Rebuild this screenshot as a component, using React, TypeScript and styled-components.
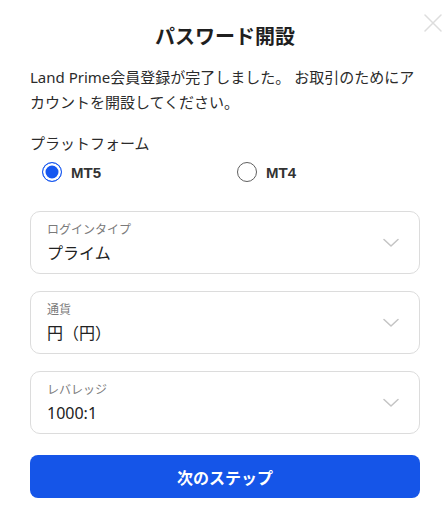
import { useState } from 'react'
import { styled, createGlobalStyle } from 'styled-components'

const GlobalStyle = createGlobalStyle`
  html, body {
    margin: 0;
    padding: 0;
    background: #ffffff;
  }
  body {
    font-family: "Noto Sans", "Noto Sans CJK JP", sans-serif;
    color: #222222;
  }
  * {
    box-sizing: border-box;
  }
`

const fields = [
  { label: 'ログインタイプ', value: 'プライム' },
  { label: '通貨', value: '円（円）' },
  { label: 'レバレッジ', value: '1000:1' },
]

const ChevronIcon = () => (
  <svg width="16" height="10" viewBox="0 0 16 10" fill="none">
    <path d="M1 1.5 L8 8 L15 1.5" stroke="#c4c4c4" strokeWidth="1.5" strokeLinecap="round" strokeLinejoin="round" />
  </svg>
)

const CloseIcon = () => (
  <svg width="18" height="18" viewBox="0 0 18 18" fill="none">
    <path d="M1 1 L17 17 M17 1 L1 17" stroke="#dddddd" strokeWidth="1.5" strokeLinecap="round" />
  </svg>
)

const App = () => {
  const [platform, setPlatform] = useState('MT5')

  return (
    <>
      <GlobalStyle />
      <Modal>
        <CloseButton aria-label="close">
          <CloseIcon />
        </CloseButton>
        <Title>パスワード開設</Title>
        <Description>
          Land Prime会員登録が完了しました。 お取引のためにアカウントを開設してください。
        </Description>
        <SectionLabel>プラットフォーム</SectionLabel>
        <RadioGroup>
          {['MT5', 'MT4'].map((p) => (
            <RadioOption key={p} onClick={() => setPlatform(p)}>
              <RadioCircle $checked={platform === p} />
              <RadioText>{p}</RadioText>
            </RadioOption>
          ))}
        </RadioGroup>
        <FieldList>
          {fields.map((f) => (
            <SelectField key={f.label}>
              <FieldTexts>
                <FieldLabel>{f.label}</FieldLabel>
                <FieldValue>{f.value}</FieldValue>
              </FieldTexts>
              <ChevronIcon />
            </SelectField>
          ))}
        </FieldList>
        <NextButton>次のステップ</NextButton>
      </Modal>
    </>
  )
}

const Modal = styled('div')({
  position: 'relative',
  width: '446px',
  padding: '22px 26px 15px 30px',
  display: 'flex',
  flexDirection: 'column',
})

const CloseButton = styled('button')({
  position: 'absolute',
  top: '14px',
  right: '4px',
  border: 'none',
  background: 'transparent',
  padding: 0,
  width: '18px',
  height: '18px',
  cursor: 'pointer',
})

const Title = styled('h1')({
  margin: 0,
  fontSize: '20px',
  lineHeight: '30px',
  fontWeight: 700,
  textAlign: 'center',
  color: '#1f1f1f',
})

const Description = styled('p')({
  margin: '13px 0 0',
  fontSize: '15px',
  lineHeight: '25px',
  color: '#2b2b2b',
})

const SectionLabel = styled('div')({
  marginTop: '17px',
  fontSize: '15px',
  lineHeight: '22px',
  color: '#2b2b2b',
})

const RadioGroup = styled('div')({
  marginTop: '7px',
  display: 'grid',
  gridTemplateColumns: '195px 1fr',
  paddingLeft: '12px',
})

const RadioOption = styled('label')({
  display: 'flex',
  alignItems: 'center',
  gap: '9px',
  height: '22px',
  cursor: 'pointer',
})

const RadioCircle = styled('span')<{ $checked: boolean }>(({ $checked }) => ({
  width: '20px',
  height: '20px',
  borderRadius: '50%',
  border: $checked ? '1.5px solid #1657f0' : '1px solid #5f5f5f',
  boxShadow: $checked ? 'inset 0 0 0 2.5px #ffffff' : 'none',
  background: $checked ? '#1657f0' : '#ffffff',
}))

const RadioText = styled('span')({
  fontFamily: '"Liberation Sans", Arial, sans-serif',
  fontSize: '15px',
  fontWeight: 700,
  color: '#333333',
})

const FieldList = styled('div')({
  marginTop: '28px',
  display: 'flex',
  flexDirection: 'column',
  gap: '17px',
})

const SelectField = styled('div')({
  height: '63px',
  border: '1px solid #dcdcdc',
  borderRadius: '10px',
  padding: '0 20px 0 16px',
  display: 'flex',
  alignItems: 'center',
  justifyContent: 'space-between',
})

const FieldTexts = styled('div')({
  display: 'flex',
  flexDirection: 'column',
  gap: '2px',
  paddingTop: '2px',
})

const FieldLabel = styled('span')({
  fontSize: '12px',
  lineHeight: '18px',
  color: '#7a7a7a',
})

const FieldValue = styled('span')({
  fontSize: '16px',
  lineHeight: '25px',
  color: '#222222',
})

const NextButton = styled('button')({
  marginTop: '21px',
  height: '43px',
  border: 'none',
  borderRadius: '8px',
  background: '#1555e8',
  color: '#ffffff',
  fontFamily: '"Noto Sans", "Noto Sans CJK JP", sans-serif',
  fontSize: '16px',
  fontWeight: 700,
  cursor: 'pointer',
})

export default App
